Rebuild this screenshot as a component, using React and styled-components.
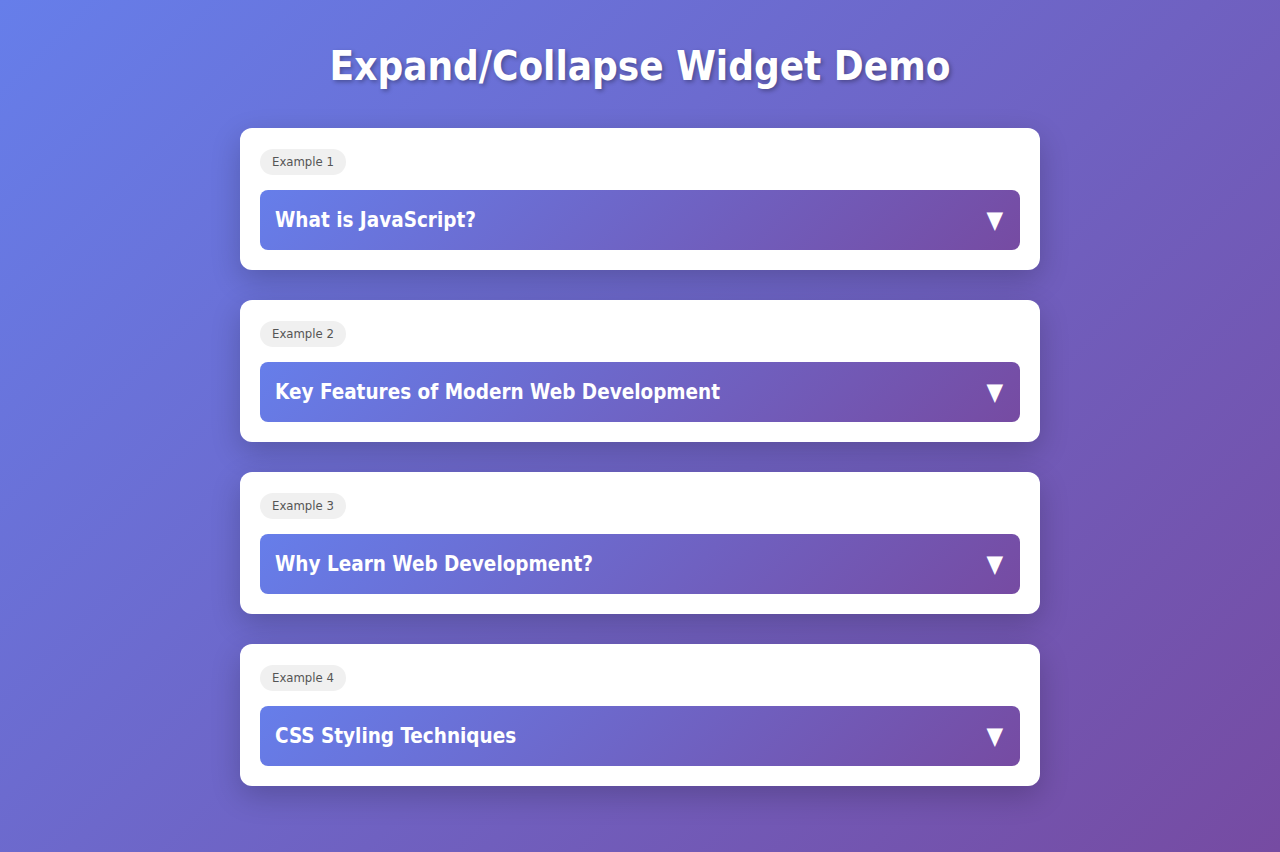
import React from 'react';
import styled, { createGlobalStyle } from 'styled-components';

const GlobalStyle = createGlobalStyle`
  * { box-sizing: border-box; }
  html, body {
    margin: 0;
    padding: 0;
  }
  body {
    min-height: 100vh;
    font-family: "DejaVu Sans Condensed", "DejaVu Sans", sans-serif;
    background: linear-gradient(135deg, #667eea 0%, #764ba2 100%);
    background-attachment: fixed;
  }
`

const Page = styled.div`
  max-width: 800px;
  margin: 0 auto;
  padding: 40px 0 40px;
`

const Title = styled.h1`
  margin: 0 0 36px;
  text-align: center;
  color: #fff;
  font-size: 40px;
  line-height: 52px;
  font-weight: bold;
  text-shadow: 2px 2px 4px rgba(0, 0, 0, 0.3);
`

const List = styled.div`
  display: flex;
  flex-direction: column;
  gap: 30px;
`

const Card = styled.div`
  background: #fff;
  border-radius: 12px;
  padding: 21px 20px 20px;
  box-shadow: 0 10px 30px rgba(0, 0, 0, 0.2);
`

const Badge = styled.span`
  display: inline-block;
  background: #f0f0f0;
  color: #555;
  font-size: 13px;
  line-height: 18px;
  padding: 4px 12px;
  border-radius: 14px;
  margin-bottom: 15px;
`

const Header = styled.button`
  display: flex;
  align-items: center;
  justify-content: space-between;
  width: 100%;
  height: 60px;
  padding: 0 17px 0 15px;
  border: none;
  border-radius: 8px;
  background: linear-gradient(135deg, #667eea 0%, #764ba2 100%);
  color: #fff;
  font-family: inherit;
  font-size: 20.5px;
  font-weight: bold;
  text-align: left;
  cursor: pointer;
`

const Arrow = styled.span`
  font-size: 24px;
  line-height: 1;
  transform: rotate(${p => (p.$open ? '180deg' : '0deg')});
  transition: transform 0.3s;
`

const Body = styled.div`
  padding: 15px 5px 0;
  color: #444;
  font-size: 15px;
  line-height: 1.6;
`

const items = [
  { label: 'Example 1', title: 'What is JavaScript?', text: 'JavaScript is a programming language that makes web pages interactive.' },
  { label: 'Example 2', title: 'Key Features of Modern Web Development', text: 'Responsive design, component-based frameworks and fast build tools.' },
  { label: 'Example 3', title: 'Why Learn Web Development?', text: 'It lets you build things anyone with a browser can use.' },
  { label: 'Example 4', title: 'CSS Styling Techniques', text: 'Flexbox, grid, custom properties and transitions.' },
]

const Widget = ({ item }) => {
  const [open, setOpen] = React.useState(false)
  return (
    <Card>
      <Badge>{item.label}</Badge>
      <Header onClick={() => setOpen(!open)}>
        {item.title}
        <Arrow $open={open}>▼</Arrow>
      </Header>
      {open && <Body>{item.text}</Body>}
    </Card>
  )
}

export default function App() {
  return (
    <>
      <GlobalStyle />
      <Page>
        <Title>Expand/Collapse Widget Demo</Title>
        <List>
          {items.map(item => <Widget key={item.label} item={item} />)}
        </List>
      </Page>
    </>
  )
}
